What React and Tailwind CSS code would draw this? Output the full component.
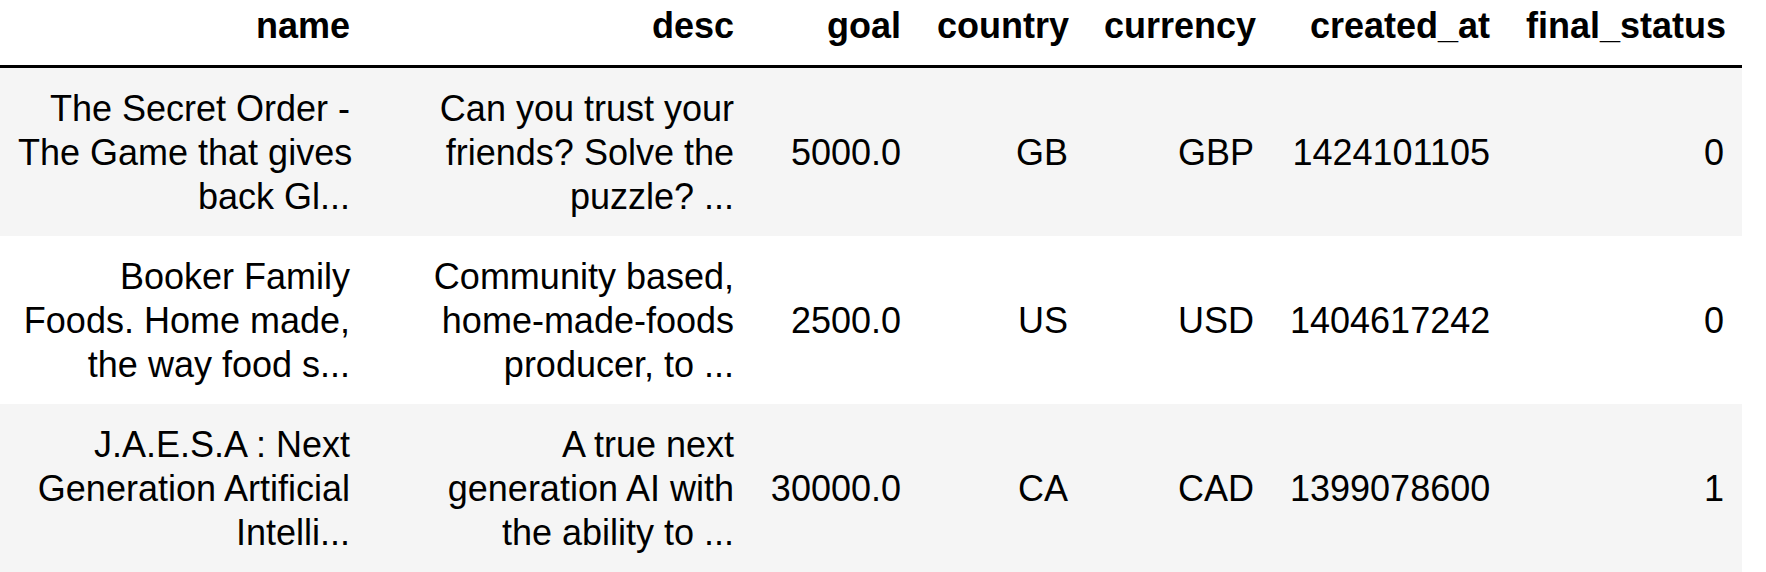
const columns = [
  { key: "name", width: "w-[368px]" },
  { key: "desc", width: "w-[384px]" },
  { key: "goal", width: "w-[167px]" },
  { key: "country", width: "w-[167px]" },
  { key: "currency", width: "w-[186px]" },
  { key: "created_at", width: "w-[236px]" },
  { key: "final_status", width: "w-[234px]" },
];

const rows = [
  {
    name: ["The Secret Order -", "The Game that gives", "back Gl..."],
    desc: ["Can you trust your", "friends? Solve the", "puzzle? ..."],
    goal: "5000.0",
    country: "GB",
    currency: "GBP",
    created_at: "1424101105",
    final_status: "0",
  },
  {
    name: ["Booker Family", "Foods. Home made,", "the way food s..."],
    desc: ["Community based,", "home-made-foods", "producer, to ..."],
    goal: "2500.0",
    country: "US",
    currency: "USD",
    created_at: "1404617242",
    final_status: "0",
  },
  {
    name: ["J.A.E.S.A : Next", "Generation Artificial", "Intelli..."],
    desc: ["A true next", "generation AI with", "the ability to ..."],
    goal: "30000.0",
    country: "CA",
    currency: "CAD",
    created_at: "1399078600",
    final_status: "1",
  },
];

function Cell({ value }) {
  if (Array.isArray(value)) {
    return (
      <>
        {value.map((line, i) => (
          <span key={i} className="block">
            {line}
          </span>
        ))}
      </>
    );
  }
  return value;
}

export default function App() {
  return (
    <div className="w-[1766px] h-[572px] bg-white overflow-hidden font-['Liberation_Sans',Arial,sans-serif] text-black text-[36px] leading-[44px]">
      <table className="table-fixed w-[1742px] border-collapse">
        <thead>
          <tr className="border-b-[3px] border-black">
            {columns.map((col) => (
              <th
                key={col.key}
                className={`${col.width} text-right font-bold align-bottom px-[18px] pt-[4px] pb-[17px] whitespace-nowrap`}
              >
                {col.key}
              </th>
            ))}
          </tr>
        </thead>
        <tbody>
          {rows.map((row, i) => (
            <tr key={i} className={i % 2 === 0 ? "bg-[#f5f5f5]" : "bg-white"}>
              {columns.map((col) => (
                <td
                  key={col.key}
                  className="h-[168px] text-right align-middle px-[18px] pt-[19px] pb-[17px] whitespace-nowrap"
                >
                  <Cell value={row[col.key]} />
                </td>
              ))}
            </tr>
          ))}
        </tbody>
      </table>
    </div>
  );
}
